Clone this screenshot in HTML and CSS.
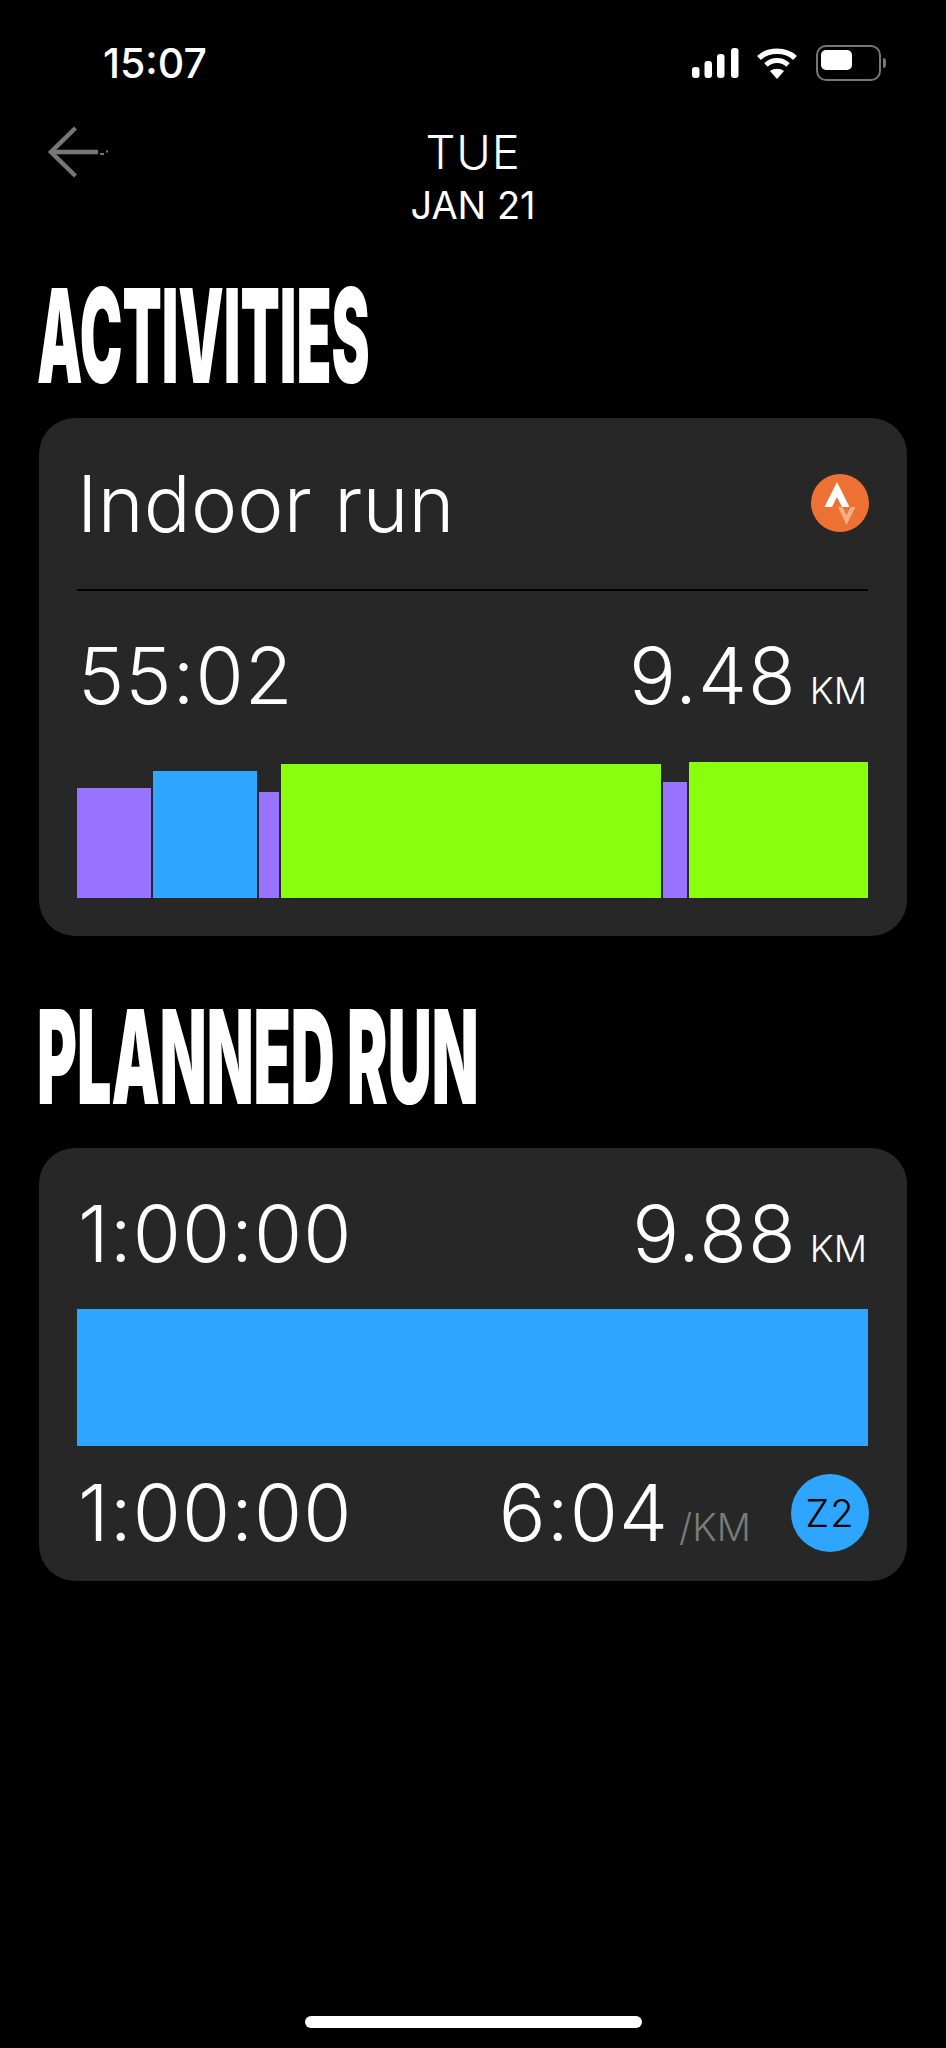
FILE: index.html
```html
<!DOCTYPE html>
<html lang="en">
<head>
  <meta charset="UTF-8" />
  <meta name="viewport" content="width=device-width, initial-scale=1.0"/>
  <title>Tue Jan 21</title>
  <link rel="stylesheet" href="styles.css">
</head>
<body>

  <div class="status">
    <span class="clock">15:07</span>
    <div class="status-icons">
      <svg class="signal" width="47" height="31" viewBox="0 0 47 31">
        <rect x="0" y="19" width="7.5" height="11" rx="3" fill="#fff"/>
        <rect x="12.5" y="13" width="7.5" height="17" rx="3" fill="#fff"/>
        <rect x="25" y="6" width="7.5" height="24" rx="3" fill="#fff"/>
        <rect x="39" y="0" width="7.5" height="30" rx="3" fill="#fff"/>
      </svg>
      <svg class="wifi" width="40" height="31" viewBox="0 0 40 31">
        <path d="M2 10 C11 1 29 1 38 10" fill="none" stroke="#fff" stroke-width="5.5" stroke-linecap="butt"/>
        <path d="M9 17 C15 11 25 11 31 17" fill="none" stroke="#fff" stroke-width="5" stroke-linecap="butt"/>
        <path d="M13 23 C17 20 23 20 27 23 L20 31 Z" fill="#fff"/>
      </svg>
      <div class="battery"><div class="battery-fill"></div></div>
      <div class="battery-nub"></div>
    </div>
  </div>

  <div class="nav">
    <svg class="back" width="62" height="54" viewBox="0 0 62 54">
      <path d="M27.5 2 L3 26 L27.5 50" fill="none" stroke="#777" stroke-width="4.5"/>
      <path d="M3 26 H50" stroke="#777" stroke-width="4.5"/>
      <path d="M52 28 H56 M58 25.5 H60" stroke="#777" stroke-width="2"/>
    </svg>
    <div class="date">
      <div class="day">TUE</div>
      <div class="month">JAN 21</div>
    </div>
  </div>

  <div class="section">
    <h1 class="heading"><span class="heading-activities">ACTIVITIES</span></h1>
    <div class="card">
      <div class="card-head">
        <span class="activity-name">Indoor run</span>
        <svg class="strava" width="58" height="58" viewBox="0 0 58 58">
          <circle cx="29" cy="29" r="29" fill="#ee7134"/>
          <path d="M26 8 L13.5 33 H21 L26 23 L31 33 H38.500 Z" fill="#fff"/>
          <path d="M27 33 H44.500 L35.500 51 Z M31.500 33 L35.500 41 L39.500 33 Z" fill="#f6ae87" fill-rule="evenodd"/>
        </svg>
      </div>
      <div class="divider"></div>
      <div class="stats stats-first">
        <span>55:02</span>
        <span>9.48<span class="unit">KM</span></span>
      </div>
      <div class="bars">
        <div class="purple" style="width:74px;height:110px"></div>
        <div class="blue" style="width:104px;height:127px"></div>
        <div class="purple" style="width:20px;height:106px"></div>
        <div class="green" style="width:380px;height:134px"></div>
        <div class="purple" style="width:24px;height:116px"></div>
        <div class="green" style="width:179px;height:136px"></div>
      </div>
    </div>
  </div>

  <div class="section section-planned">
    <h1 class="heading"><span class="heading-planned">PLANNED RUN</span></h1>
    <div class="card card-planned">
      <div class="stats">
        <span>1:00:00</span>
        <span>9.88<span class="unit">KM</span></span>
      </div>
      <div class="plan-bar"></div>
      <div class="stats stats-zone">
        <span>1:00:00</span>
        <div class="pace">
          <span>6:04<span class="unit unit-grey">/KM</span></span>
          <span class="zone">Z2</span>
        </div>
      </div>
    </div>
  </div>

  <div class="home-bar"></div>

</body>
</html>
```

FILE: styles.css
```css
html, body {
  margin: 0;
  height: 2048px;
  overflow: hidden;
}
body {
  position: relative;
  background: #000;
  color: #fff;
  font-family: Inter, "Liberation Sans", sans-serif;
  font-weight: 300;
}

/* status bar */
.status {
  height: 126px;
  display: flex;
  justify-content: space-between;
  align-items: center;
  padding: 0 60px 0 103px;
}
.clock {
  font-size: 41px;
  font-weight: 500;
}
.status-icons {
  display: flex;
  align-items: center;
}
.wifi {
  margin-left: 18px;
}
.battery {
  width: 55px;
  height: 26px;
  margin-left: 19px;
  padding: 3px;
  border: 2.500px solid #777;
  border-radius: 10px;
}
.battery-fill {
  width: 31px;
  height: 20px;
  background: #fff;
  border-radius: 5px;
}
.battery-nub {
  width: 3px;
  height: 10px;
  margin-left: 2px;
  background: #777;
  border-radius: 0 3px 3px 0;
}

/* nav */
.nav {
  height: 100px;
  display: grid;
  grid-template-columns: 1fr auto 1fr;
}
.back {
  margin: 0 0 0 48px;
}
.date {
  grid-column: 2;
  text-align: center;
  font-weight: 400;
}
.day {
  font-size: 47px;
  line-height: 52px;
  font-weight: 300;
  letter-spacing: 0.8px;
}
.month {
  font-size: 38px;
  line-height: 44px;
  margin-top: 5px;
}

/* sections */
.section {
  padding: 0 39px;
}
.heading {
  margin: 60px 0 32px;
  height: 100px;
  font-size: 100px;
  line-height: 100px;
  font-weight: 900;
  white-space: nowrap;
}
.heading span {
  display: inline-block;
  margin-left: -2px;
  transform-origin: left center;
}
.heading-activities {
  transform: scale(0.572, 1.31);
}
.heading-planned {
  transform: scale(0.609, 1.31);
}
.section-planned .heading {
  margin: 71px 0 41px;
}

.card {
  background: #272727;
  border-radius: 36px;
  padding: 38px;
}
.card-planned {
  padding: 56px 38px 29px;
}
.card-head {
  height: 94px;
  display: flex;
  justify-content: space-between;
  align-items: center;
}
.activity-name {
  font-size: 78px;
  font-weight: 340;
  letter-spacing: 0.2px;
}
.divider {
  height: 2px;
  margin: 39px 1px 0 0;
  background: #000;
}
.stats {
  display: flex;
  justify-content: space-between;
  align-items: baseline;
  height: 60px;
  padding-left: 1px;
  font-size: 78px;
  font-weight: 340;
  line-height: 60px;
  letter-spacing: 1px;
}
.stats-first {
  margin-top: 55px;
}
.unit {
  font-size: 37px;
  line-height: 0;
  letter-spacing: 0;
  margin-left: 13px;
  margin-right: 2px;
}
.unit-grey {
  font-size: 38px;
  color: #7a7a7a;
  margin-left: 10px;
  margin-right: 0;
}

.bars {
  height: 136px;
  margin: 56px 1px 0 0;
  display: flex;
  align-items: flex-end;
  gap: 2px;
}
.purple { background: #9873ff; }
.blue { background: #2ea6ff; }
.green { background: #8aff0d; }

.plan-bar {
  height: 137px;
  margin: 45px 1px 0 0;
  background: #2ea6ff;
}
.stats-zone {
  height: 78px;
  margin-top: 28px;
  align-items: center;
}
.pace {
  display: flex;
  align-items: center;
}
.zone {
  width: 78px;
  height: 78px;
  margin-left: 40px;
  border-radius: 50%;
  background: #2ea6ff;
  color: #000;
  font-size: 38px;
  font-weight: 300;
  letter-spacing: 1px;
  line-height: 78px;
  text-align: center;
}

.home-bar {
  position: absolute;
  left: 305px;
  top: 2016px;
  width: 337px;
  height: 12px;
  background: #fff;
  border-radius: 6px;
}
```
